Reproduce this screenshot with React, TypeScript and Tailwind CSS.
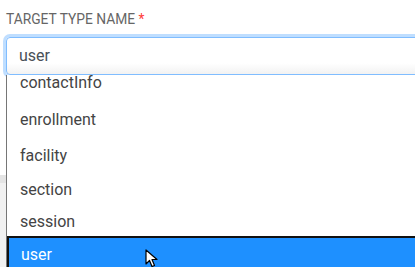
import React from "react";

const options = ["contactInfo", "enrollment", "facility", "section", "session", "user"];

function OptionRow({ label, selected, h }: { label: string; selected?: boolean; h: string }) {
  if (selected) {
    return (
      <div className={`${h} flex items-center pl-[12px] bg-[#1e90ff] text-white border-t-2 border-l-2 border-[#111]`}>
        <span>{label}</span>
        <svg className="ml-[93px] mt-[8px]" width="14" height="20" viewBox="0 0 14 20">
          <path d="M1 1 L1 15 L4.5 11.5 L7 17.5 L9.5 16.5 L7 10.5 L12 10.5 Z" fill="#fff" stroke="#000" strokeWidth="1.2" strokeLinejoin="round" />
        </svg>
      </div>
    );
  }
  return (
    <div className={`${h} flex items-center pl-[13px] text-[#444]`}>
      <span>{label}</span>
    </div>
  );
}

export default function App() {
  return (
    <div className="relative w-[415px] h-[267px] overflow-hidden bg-white" style={{ fontFamily: "Roboto, 'Liberation Sans', sans-serif" }}>
      <div className="pl-[6px] pt-[11px]">
        <label className="block text-[13.8px] leading-[16px] text-[#666]">
          TARGET TYPE NAME <span className="text-[#ff3b3b]">*</span>
        </label>
        <div className="mt-[10px] h-[38px] w-[430px] rounded-[4px] border border-[#80bdff] shadow-[0_0_0_3px_rgba(0,123,255,0.25)] bg-gradient-to-b from-white from-70% to-[#f2f2f2] flex items-center pl-[12px] text-[16px] text-[#495057]">
          user
        </div>
        <div className="mt-[100px] h-[8px] -ml-[6px] bg-[#e4e4e4]" />
        <div className="-ml-[6px] h-[100px] bg-[#f1f1f1]" />
      </div>

      <div className="absolute left-[6px] top-[75px] right-0 bottom-0 bg-white border-l border-[#767676] text-[16px]">
        <div className="-mt-[10.5px]">
          <OptionRow label={options[0]} h="h-[37px]" />
          <OptionRow label={options[1]} h="h-[37px]" />
          <OptionRow label={options[2]} h="h-[35px]" />
          <OptionRow label={options[3]} h="h-[33.5px]" />
          <OptionRow label={options[4]} h="h-[29px]" />
          <OptionRow label={options[5]} selected h="h-[36px]" />
        </div>
      </div>
    </div>
  );
}
